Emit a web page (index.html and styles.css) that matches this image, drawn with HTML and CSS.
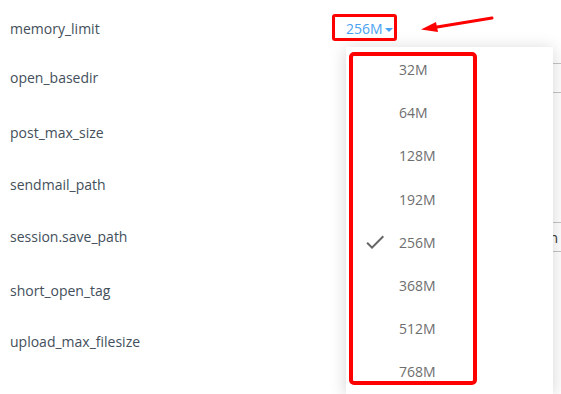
FILE: index.html
```html
<!DOCTYPE html>
<html>
<head>
<meta charset="utf-8">
<link rel="stylesheet" href="styles.css">
</head>
<body>
<div class="settings">
  <div class="row h46">
    <div class="label">memory_limit</div>
    <div class="field">
      <span class="trigger">256M<span class="caret"></span></span>
    </div>
  </div>
  <div class="row h52">
    <div class="label">open_basedir</div>
    <div class="field"><div class="input"></div></div>
  </div>
  <div class="row h58">
    <div class="label">post_max_size</div>
    <div class="field"></div>
  </div>
  <div class="row h46">
    <div class="label">sendmail_path</div>
    <div class="field"></div>
  </div>
  <div class="row h58">
    <div class="label">session.save_path</div>
    <div class="field"><div class="input"><span class="value">session</span></div></div>
  </div>
  <div class="row h50">
    <div class="label">short_open_tag</div>
    <div class="field"></div>
  </div>
  <div class="row h52">
    <div class="label">upload_max_filesize</div>
    <div class="field"></div>
  </div>
</div>

<div class="menu">
  <ul class="menu-list">
    <li class="menu-item"><span class="check"></span><span>32M</span></li>
    <li class="menu-item"><span class="check"></span><span>64M</span></li>
    <li class="menu-item"><span class="check"></span><span>128M</span></li>
    <li class="menu-item"><span class="check"></span><span>192M</span></li>
    <li class="menu-item selected"><span class="check"><svg viewBox="0 0 24 24" width="24" height="24"><path d="M9 16.17L4.83 12l-1.42 1.41L9 19 21 7l-1.41-1.41z" fill="#666"/></svg></span><span>256M</span></li>
    <li class="menu-item"><span class="check"></span><span>368M</span></li>
    <li class="menu-item"><span class="check"></span><span>512M</span></li>
    <li class="menu-item"><span class="check"></span><span>768M</span></li>
  </ul>
</div>

<div class="mark mark-trigger"></div>
<div class="mark mark-menu"></div>
<svg class="arrow" width="80" height="24" viewBox="0 0 80 24">
  <line x1="72" y1="3" x2="14" y2="12.5" stroke="#f00" stroke-width="3" stroke-linecap="round"/>
  <polygon points="1,14.5 16,7 18,17" fill="#f00"/>
</svg>
</body>
</html>
```

FILE: styles.css
```css
html, body {
  margin: 0;
  padding: 0;
  overflow: hidden;
  background: #fff;
}
body {
  width: 561px;
  height: 394px;
  position: relative;
  font-family: "Open Sans", "Noto Sans", sans-serif;
  font-size: 14px;
}
.settings {
  padding: 6px 0 0 10px;
}
.row {
  display: flex;
  align-items: center;
}
.h46 { height: 46px; }
.h50 { height: 50px; }
.h52 { height: 52px; }
.h58 { height: 58px; }
.label {
  width: 336px;
  flex: 0 0 336px;
  color: #434f5b;
  line-height: 20px;
}
.field {
  flex: 0 0 215px;
}
.trigger {
  color: #4aa3f2;
  display: inline-flex;
  align-items: center;
  line-height: 20px;
}
.caret {
  display: inline-block;
  width: 0;
  height: 0;
  margin-left: 2px;
  margin-top: 1px;
  border-left: 4px solid transparent;
  border-right: 4px solid transparent;
  border-top: 4px solid #4aa3f2;
}
.input {
  height: 28px;
  border: 1px solid #c4c4c4;
  border-right: none;
  display: flex;
  align-items: center;
  color: #333;
}
.value {
  display: block;
  width: 211px;
  text-align: right;
}
.menu {
  position: absolute;
  left: 346px;
  top: 47px;
  width: 207px;
  height: 347px;
  background: #fff;
  box-shadow: 0 2px 16px rgba(0, 0, 0, 0.17);
}
.menu-list {
  list-style: none;
  margin: 0;
  padding: 1px 0 0 0;
}
.menu-item {
  height: 43.2px;
  display: flex;
  align-items: center;
  padding-left: 17px;
  color: #6e6e6e;
  font-size: 14px;
}
.check {
  width: 24px;
  height: 24px;
  margin-right: 12px;
  display: block;
}
.check svg {
  display: block;
}
.mark {
  position: absolute;
  border: 3px solid #f00;
  border-radius: 3px;
  box-sizing: border-box;
}
.mark-trigger {
  left: 332px;
  top: 14px;
  width: 65px;
  height: 27px;
}
.mark-menu {
  left: 349px;
  top: 52px;
  width: 128px;
  height: 333px;
  border-width: 4px;
  border-radius: 5px;
}
.arrow {
  position: absolute;
  left: 420px;
  top: 15px;
}
```
